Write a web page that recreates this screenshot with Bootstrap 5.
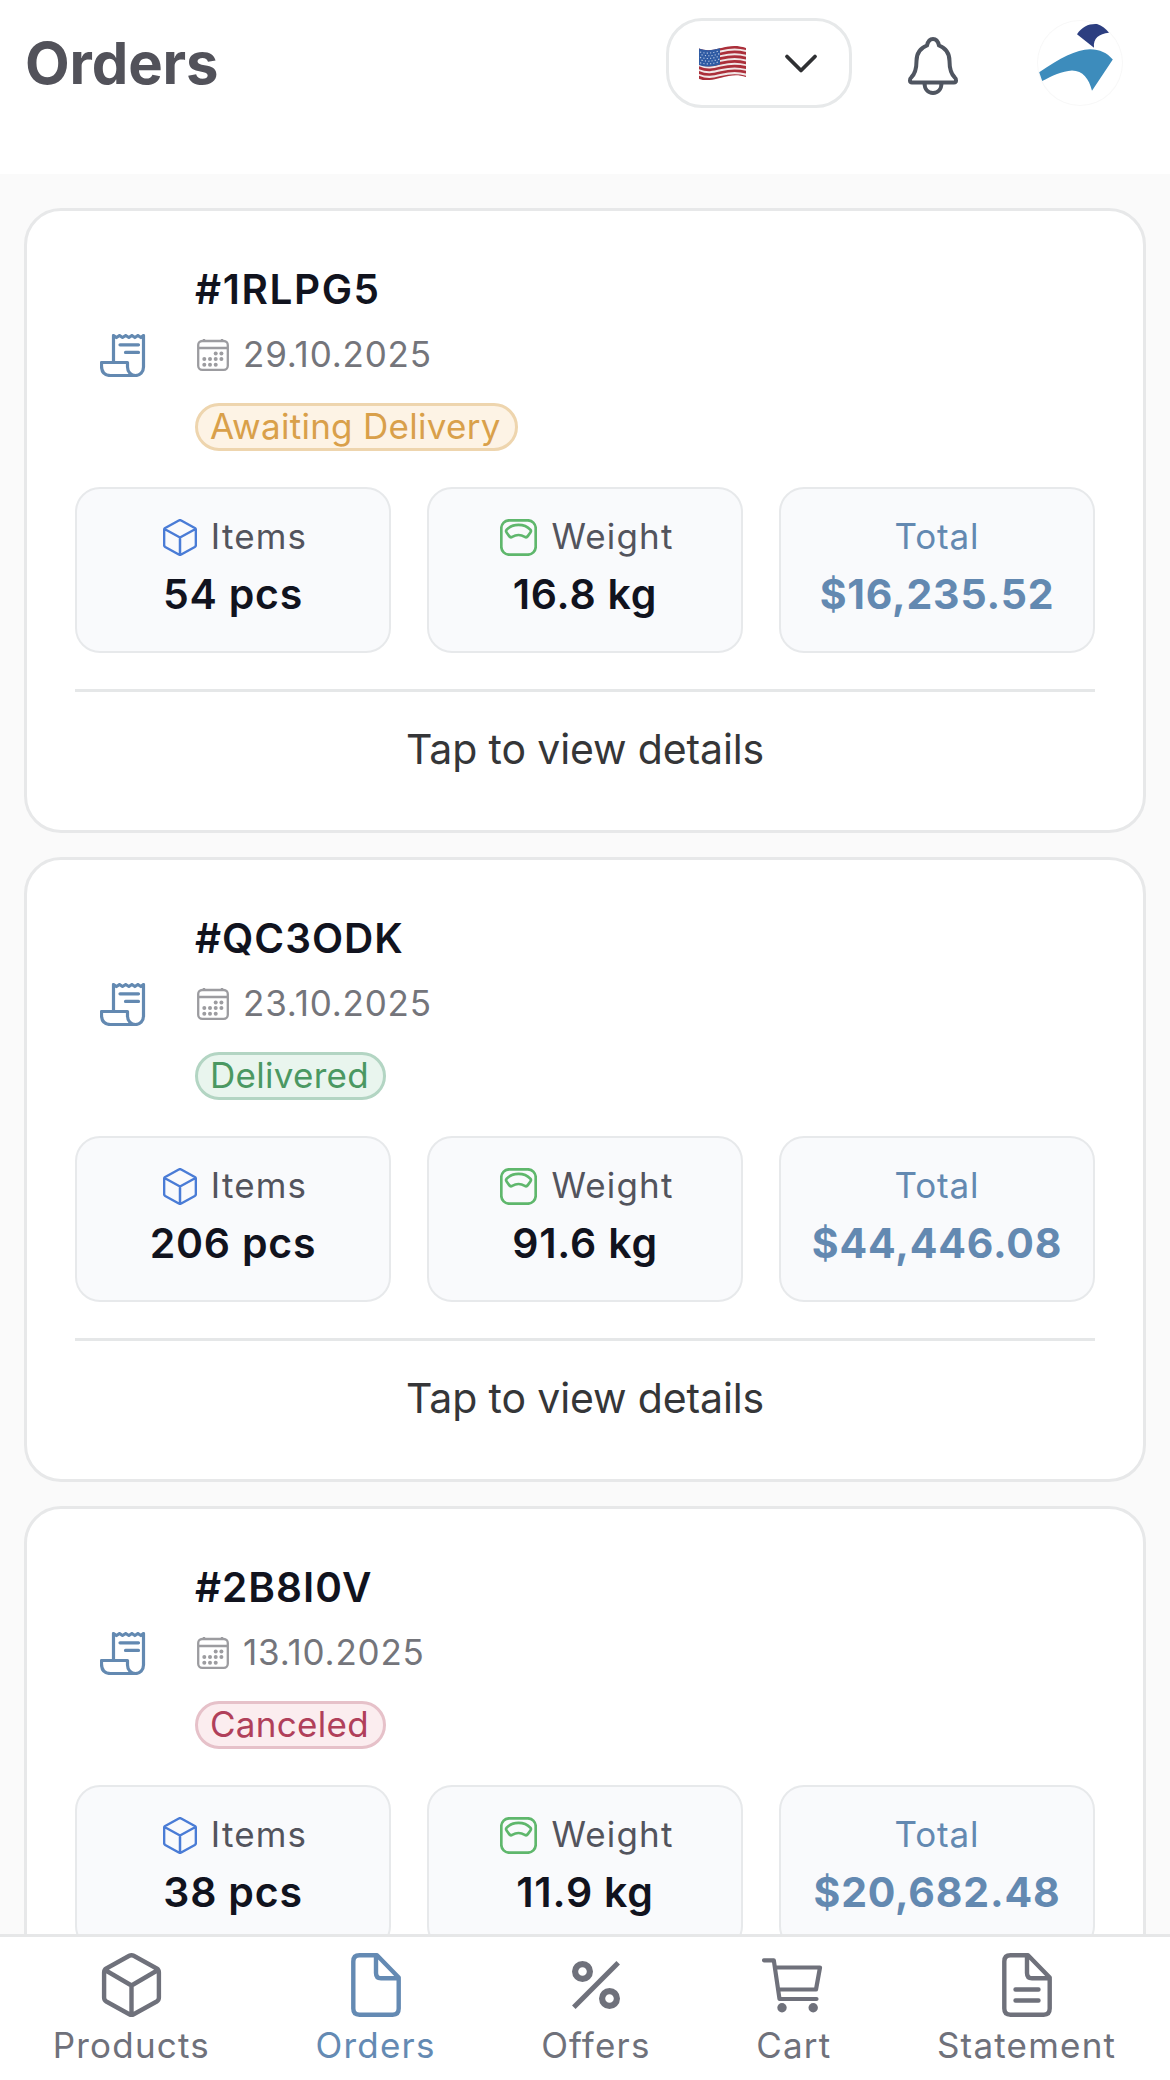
<!DOCTYPE html>
<html lang="en">
<head>
<meta charset="utf-8">
<meta name="viewport" content="width=device-width, initial-scale=1">
<title>Orders</title>
<link href="https://cdn.jsdelivr.net/npm/bootstrap@5.3.0/dist/css/bootstrap.min.css" rel="stylesheet">
<style>
  body { font-family: Inter, "Liberation Sans", sans-serif; background: #fafafa; color: #11131e; }
  svg { display: block; flex: none; overflow: visible; }
  .topbar { height: 174px; padding: 18px 48px 0 25px; }
  .topbar-row { height: 90px; }
  .page-title { font-size: 58px; line-height: 70px; font-weight: 700; color: #52525a; letter-spacing: -.1px; }
  .lang-btn { width: 186px; height: 90px; padding: 0 32px 0 30px; border: 3px solid #e7e9ea; border-radius: 36px; margin-right: 56px; }
  .bell-btn { margin-right: 80px; color: #4f5560; }
  .bell-btn svg { margin-top: 5px; }
  .avatar { width: 84px; height: 84px; box-shadow: 0 0 0 1px #f8f8f8; }

  .orders { padding: 34px 24px 0 24px; gap: 24px; }
  .order-card { height: 625px; flex: none; padding: 54px 48px 0 48px; border: 3px solid #e7e8e9; border-radius: 37px; }
  .receipt { width: 96px; margin-right: 24px; padding-bottom: 5px; color: #6389b1; }
  .order-no { font-size: 40.5px; line-height: 48px; font-weight: 600; letter-spacing: 1px; padding-top: 1px; }
  .order-no-wide { letter-spacing: 1.6px; }
  .order-date { margin-top: 19px; gap: 14px; padding-left: 2px; font-size: 35px; line-height: 42px; color: #74757b; letter-spacing: .8px; }
  .order-date svg { color: #9c9ca0; margin-top: 2px; }
  .status { margin-top: 28px; height: 48px; padding: 0 14px 0 12px; border: 3px solid; border-radius: 24px; font-size: 35px; line-height: 41px; letter-spacing: .28px; }
  .status-wait { color: #d9a04a; background: #fdf3e5; border-color: #eed5ae; }
  .status-done { color: #4b9862; background: #e9f5ee; border-color: #b3d5c3; }
  .status-void { color: #b0405a; background: #fbedef; border-color: #e6c1c9; }
  .stats { margin-top: 36px; gap: 36px; }
  .stat { flex: 1 1 0; height: 166px; padding-top: 26px; border: 2px solid #e7e9eb; border-radius: 25px; background: #f9fafc; }
  .stat-label { height: 42px; gap: 14px; padding-left: 4px; font-size: 35px; line-height: 42px; color: #53545d; letter-spacing: 1.15px; }
  .stat-label svg { margin-top: 3px; }
  .stat-total .stat-label { letter-spacing: .85px; padding-left: 0; }
  .stat-value { margin-top: 13px; font-size: 41px; line-height: 48px; font-weight: 600; letter-spacing: .8px; }
  .stat-total, .stat-total .stat-label { color: #6389b1; }
  .stat-total .stat-value { font-weight: 700; }
  .c-cube { color: #4a7cd6; }
  .c-scale { color: #5fb76c; }
  .details { margin-top: 36px; padding-top: 33px; border-top: 3px solid #e5e7e8; font-size: 41px; line-height: 48px; color: #353638; letter-spacing: -.14px; }

  .tabs-bar { height: 146px; flex: none; padding: 16px 1px 0 0; border-top: 3px solid #e6e7e8; }
  .tab-item { color: #6f717b; font-size: 35px; line-height: 42px; letter-spacing: 1.2px; text-decoration: none; }
  .tab-item.current { color: #648ab3; }
  .tab-icon { height: 64px; margin-bottom: 7px; }
</style>
</head>
<body class="vh-100 d-flex flex-column overflow-hidden">

<svg width="0" height="0" class="position-absolute" aria-hidden="true">
  <defs>
    <symbol id="i-receipt" viewBox="0 0 46 43">
      <g fill="none" stroke="currentColor" stroke-width="3.200" stroke-linejoin="round" stroke-linecap="round">
        <path d="M13.500 28V1.500l3 2 3-2 3 2 3.200-2 3.200 2 3-2 3 2 3-2 3 2 2.600-2V33c0 5-3.500 8.500-8 8.500s-8-3.500-8-8.500v-4.500H1.500V32c0 6 3 9.500 9 9.500H37"/>
        <path d="M20 10.800h18.500M25.500 18.400h13"/>
      </g>
    </symbol>
    <symbol id="i-calendar" viewBox="0 0 32 32">
      <g fill="none" stroke="currentColor" stroke-width="2.300"><rect x="1.200" y="2" width="29.600" height="28.800" rx="4"/><path d="M1 9h30M7 0v3M25 0v3"/></g>
      <g fill="currentColor"><circle cx="18.700" cy="14.500" r="2"/><circle cx="24.400" cy="14.500" r="2"/><circle cx="7.300" cy="20" r="2"/><circle cx="13" cy="20" r="2"/><circle cx="18.700" cy="20" r="2"/><circle cx="24.400" cy="20" r="2"/><circle cx="7.300" cy="25.700" r="2"/><circle cx="13" cy="25.700" r="2"/><circle cx="18.700" cy="25.700" r="2"/></g>
    </symbol>
    <symbol id="i-cube" viewBox="0 0 34 37">
      <path fill="none" stroke="currentColor" stroke-width="2.500" stroke-linejoin="round" d="M15.800 1.500q1.200-.6 2.400 0L31.800 9q1.100.7 1.100 2v15q0 1.300-1.100 2L18.200 35.500q-1.200.6-2.400 0L2.200 28q-1.100-.7-1.100-2V11q0-1.300 1.100-2ZM1.500 10 17 18.500 32.500 10M17 18.500V36"/>
    </symbol>
    <symbol id="i-scale" viewBox="0 0 37 37">
      <g fill="none" stroke="currentColor" stroke-width="2.700" stroke-linejoin="round"><rect x="1.300" y="1.300" width="34.400" height="34.400" rx="8"/><path d="M6.700 10.700C12.500 4.200 24.500 4.200 30.300 10.700q1.200 1.300.1 2.800l-2.600 3.600q-1.300 1.800-3 .7-6.300-3.600-12.600 0-1.700 1.100-3-.7l-2.600-3.600q-1.100-1.500.1-2.800Z"/></g>
    </symbol>
    <symbol id="i-flag" viewBox="0 0 47 34">
      <clipPath id="flagShape"><path d="M0 2.500C8 5.500 14 4 22 2S38-1 47 2V31C38 28 31 29.500 22 31.700S8 35 0 33.500Z"/></clipPath>
      <path id="wave" d="M-1 2.500C8 6.500 14 5 22 3S38 0 48 3" fill="none"/>
      <g clip-path="url(#flagShape)">
        <rect width="47" height="34" fill="#f1e6e6"/>
        <g stroke="#ab2f3a" stroke-width="2.700">
          <use href="#wave"/><use href="#wave" y="4.700"/><use href="#wave" y="9.400"/><use href="#wave" y="14.100"/><use href="#wave" y="18.800"/><use href="#wave" y="23.500"/><use href="#wave" y="28.400"/>
        </g>
        <path d="M0 0H21V18.500C14 20.500 8 21.500 0 19Z" fill="#2f5ba3"/>
        <g stroke="#b9c9e4" stroke-width="1.100" stroke-dasharray="1.200 2.200" fill="none">
          <path d="M1 6c7 2 12 1 19-1M2.500 8.700c7 2 11 1 18-1M1 11.400c7 2 12 1 19-1M2.500 14.100c7 2 11 1 18-1M1 16.800c7 2 12 1 19-1"/>
        </g>
      </g>
    </symbol>
    <symbol id="i-page" viewBox="0 0 50 64">
      <path fill="none" stroke="currentColor" stroke-width="4.400" stroke-linejoin="round" d="M8.500 2.300H26L47.700 24.500V55.500q0 6.200-6 6.200H8.500q-6.200 0-6.200-6.200v-47q0-6.200 6.200-6.200ZM25 3V20q0 5.300 5 5.300H47"/>
    </symbol>
  </defs>
</svg>

<header class="topbar bg-white flex-shrink-0">
  <div class="topbar-row d-flex align-items-center">
    <h1 class="page-title mb-0 me-auto">Orders</h1>
    <button type="button" class="lang-btn bg-white d-flex align-items-center justify-content-between" aria-label="Language">
      <svg width="47" height="34"><use href="#i-flag"/></svg>
      <svg width="32" height="19" viewBox="0 0 32 19"><path d="M2 2.500 16 16.500 30 2.500" fill="none" stroke="#2f3033" stroke-width="3.800" stroke-linecap="round" stroke-linejoin="round"/></svg>
    </button>
    <button type="button" class="bell-btn btn p-0 border-0" aria-label="Notifications">
      <svg width="50" height="58" viewBox="0 0 50 58"><path d="M4 45.500H46C48.600 45.500 48.600 42 46.800 40.500 42.500 36.500 41.500 32 41.500 24 41.500 16 37.500 11 31 8.500 30 4 28 2 25 2S20 4 19 8.500C12.500 11 8.500 16 8.500 24 8.500 32 7.500 36.500 3.200 40.500 1.400 42 1.400 45.500 4 45.500ZM16.500 46C16.500 52 20 56 25 56s8.500-4 8.500-10" fill="none" stroke="currentColor" stroke-width="4" stroke-linejoin="round"/></svg>
    </button>
    <div class="avatar rounded-circle bg-white">
      <svg width="84" height="84" viewBox="0 0 84 84"><path fill="#3d8cbc" d="M1.200 51.300C22 37 38 28.800 52 28.300 62 28.300 69 32 74.800 38.500L54 69.700C51 58 45 49.500 34 49.500 24 50 14 55 4.200 60Z"/><path fill="#2c3e80" d="M39 13.300C44 5.500 51 2.500 59 3 64 4.500 68 8 71 11.700 61 13 55 17 56 26.700Z"/></svg>
    </div>
  </div>
</header>

<main class="orders d-flex flex-column flex-grow-1 overflow-hidden">
  <article class="order-card bg-white">
    <div class="d-flex align-items-center">
      <div class="receipt d-flex justify-content-center"><svg width="46" height="43"><use href="#i-receipt"/></svg></div>
      <div class="d-flex flex-column align-items-start">
        <div class="order-no order-no-wide">#1RLPG5</div>
        <div class="order-date d-flex align-items-center"><svg width="32" height="32"><use href="#i-calendar"/></svg><span>29.10.2025</span></div>
        <span class="status status-wait">Awaiting Delivery</span>
      </div>
    </div>
    <div class="stats d-flex text-center">
      <div class="stat"><div class="stat-label d-flex align-items-center justify-content-center"><svg class="c-cube" width="34" height="37"><use href="#i-cube"/></svg>Items</div><div class="stat-value">54 pcs</div></div>
      <div class="stat"><div class="stat-label d-flex align-items-center justify-content-center"><svg class="c-scale" width="37" height="37"><use href="#i-scale"/></svg>Weight</div><div class="stat-value">16.8 kg</div></div>
      <div class="stat stat-total"><div class="stat-label">Total</div><div class="stat-value">$16,235.52</div></div>
    </div>
    <div class="details text-center">Tap to view details</div>
  </article>

  <article class="order-card bg-white">
    <div class="d-flex align-items-center">
      <div class="receipt d-flex justify-content-center"><svg width="46" height="43"><use href="#i-receipt"/></svg></div>
      <div class="d-flex flex-column align-items-start">
        <div class="order-no">#QC3ODK</div>
        <div class="order-date d-flex align-items-center"><svg width="32" height="32"><use href="#i-calendar"/></svg><span>23.10.2025</span></div>
        <span class="status status-done">Delivered</span>
      </div>
    </div>
    <div class="stats d-flex text-center">
      <div class="stat"><div class="stat-label d-flex align-items-center justify-content-center"><svg class="c-cube" width="34" height="37"><use href="#i-cube"/></svg>Items</div><div class="stat-value">206 pcs</div></div>
      <div class="stat"><div class="stat-label d-flex align-items-center justify-content-center"><svg class="c-scale" width="37" height="37"><use href="#i-scale"/></svg>Weight</div><div class="stat-value">91.6 kg</div></div>
      <div class="stat stat-total"><div class="stat-label">Total</div><div class="stat-value">$44,446.08</div></div>
    </div>
    <div class="details text-center">Tap to view details</div>
  </article>

  <article class="order-card bg-white">
    <div class="d-flex align-items-center">
      <div class="receipt d-flex justify-content-center"><svg width="46" height="43"><use href="#i-receipt"/></svg></div>
      <div class="d-flex flex-column align-items-start">
        <div class="order-no">#2B8I0V</div>
        <div class="order-date d-flex align-items-center"><svg width="32" height="32"><use href="#i-calendar"/></svg><span>13.10.2025</span></div>
        <span class="status status-void">Canceled</span>
      </div>
    </div>
    <div class="stats d-flex text-center">
      <div class="stat"><div class="stat-label d-flex align-items-center justify-content-center"><svg class="c-cube" width="34" height="37"><use href="#i-cube"/></svg>Items</div><div class="stat-value">38 pcs</div></div>
      <div class="stat"><div class="stat-label d-flex align-items-center justify-content-center"><svg class="c-scale" width="37" height="37"><use href="#i-scale"/></svg>Weight</div><div class="stat-value">11.9 kg</div></div>
      <div class="stat stat-total"><div class="stat-label">Total</div><div class="stat-value">$20,682.48</div></div>
    </div>
  </article>
</main>

<nav class="tabs-bar bg-white d-flex justify-content-around">
  <a href="#" class="tab-item d-flex flex-column align-items-center">
    <span class="tab-icon d-flex align-items-center"><svg width="59" height="64" viewBox="0 0 59 64"><path fill="none" stroke="currentColor" stroke-width="4.400" stroke-linejoin="round" d="M27.300 2.800q2.200-1.200 4.400 0L54.700 15.500q2.200 1.300 2.200 3.900V44.600q0 2.600-2.200 3.900L31.700 61.200q-2.200 1.200-4.400 0L4.300 48.500q-2.200-1.300-2.200-3.900V19.400q0-2.600 2.200-3.900ZM3 17 29.500 32.500 56 17M29.500 32.500V61.500"/></svg></span>
    <span>Products</span>
  </a>
  <a href="#" class="tab-item current d-flex flex-column align-items-center">
    <span class="tab-icon d-flex align-items-center"><svg width="50" height="64"><use href="#i-page"/></svg></span>
    <span>Orders</span>
  </a>
  <a href="#" class="tab-item d-flex flex-column align-items-center">
    <span class="tab-icon d-flex align-items-center"><svg width="48" height="48" viewBox="0 0 48 48"><g fill="none" stroke="currentColor" stroke-width="6.200"><circle cx="10.500" cy="10.500" r="7.400"/><circle cx="37.500" cy="37.500" r="7.400"/><path stroke-width="5" d="M1.800 46.200 46.200 1.800"/></g></svg></span>
    <span>Offers</span>
  </a>
  <a href="#" class="tab-item d-flex flex-column align-items-center">
    <span class="tab-icon d-flex align-items-center"><svg width="60" height="55" viewBox="2 0 60 55"><path fill="none" stroke="currentColor" stroke-width="4.200" stroke-linecap="round" stroke-linejoin="round" d="M2 2.300H11.800L17.500 41H54.500M13 9.500H58L54 31.500H16"/><circle cx="20" cy="49.800" r="4.700" fill="currentColor"/><circle cx="51.200" cy="49.800" r="4.700" fill="currentColor"/></svg></span>
    <span>Cart</span>
  </a>
  <a href="#" class="tab-item d-flex flex-column align-items-center">
    <span class="tab-icon d-flex align-items-center"><svg width="50" height="64" viewBox="0 0 50 64"><use href="#i-page" width="50" height="64"/><path stroke="currentColor" stroke-width="4.400" stroke-linecap="round" d="M13.500 36.500H36.500M13.500 47.500H36.500"/></svg></span>
    <span>Statement</span>
  </a>
</nav>

<script src="https://cdn.jsdelivr.net/npm/bootstrap@5.3.0/dist/js/bootstrap.bundle.min.js"></script>
</body>
</html>
